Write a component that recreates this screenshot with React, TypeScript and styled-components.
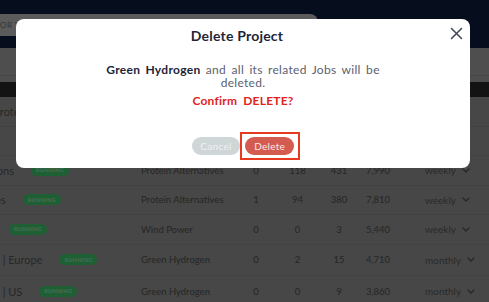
import styled, {createGlobalStyle} from 'styled-components'

const GlobalStyle = createGlobalStyle`
  html, body {
    margin: 0;
    padding: 0;
    width: 489px;
    height: 302px;
    overflow: hidden;
    font-family: 'Lato', 'Open Sans', sans-serif;
  }
`

const Page = styled.div`
  position: relative;
  width: 489px;
  height: 302px;
  overflow: hidden;
  background: #8e8e8e;
`

const TopBar = styled.header`
  height: 48px;
  background: #0c1a3a;
  padding-top: 14px;
  box-sizing: border-box;
`

const SearchBox = styled.div`
  width: 318px;
  height: 22px;
  background: #b6b6b6;
  border-top-right-radius: 8px;
  display: flex;
  align-items: center;
  font-size: 8px;
  letter-spacing: 0.6px;
  color: #6a6a6a;
  white-space: nowrap;
  overflow: hidden;
`

const Toolbar = styled.div`
  height: 34px;
  background: #9c9c9c;
  padding-top: 27px;
  box-sizing: border-box;

  &::after {
    content: '';
    display: block;
    border-top: 1px solid #8a8a8a;
  }
`

const TableWrap = styled.div`
  overflow: hidden;
`

const Table = styled.div`
  margin-left: -80px;
  width: 600px;
`

const HeaderRow = styled.div`
  height: 15px;
  background: #262626;
`

const Row = styled.div<{ $tall?: boolean }>`
  display: grid;
  grid-template-columns: 221px 94px 42px 41px 42px 36px 1fr;
  align-items: center;
  height: ${p => (p.$tall ? 30.5 : 28.5)}px;
  border-bottom: 1px solid #878787;
  font-size: 9.5px;
  color: #4c4c4c;
  white-space: nowrap;
`

const NameCell = styled.div`
  display: flex;
  align-items: center;
  gap: 17px;
  font-size: 11px;
  color: #505050;
`

const Badge = styled.span`
  background: #3fbf68;
  color: #92d9a8;
  font-size: 5.5px;
  font-weight: 700;
  letter-spacing: 0.3px;
  padding: 2.5px 5px;
  border-radius: 8px;
`

const NumCell = styled.div`
  text-align: center;
`

const FreqCell = styled.div`
  display: flex;
  align-items: center;
  gap: 6px;
  padding-left: 29px;
  color: #555;
  font-size: 10px;
`

const Overlay = styled.div`
  position: absolute;
  inset: 0;
  background: rgba(0, 0, 0, 0.5);
`

const Modal = styled.div`
  position: absolute;
  left: 16px;
  top: 19px;
  width: 454px;
  height: 149px;
  background: #fff;
  border-radius: 8px;
  display: flex;
  flex-direction: column;
  align-items: center;
  box-sizing: border-box;
  padding-top: 8px;
`

const Title = styled.h2`
  margin: 0 12px 0 0;
  font-size: 14px;
  font-weight: 700;
  color: #1e2538;
  line-height: 18px;
  letter-spacing: 0.2px;
`

const CloseButton = styled.button`
  position: absolute;
  right: 3px;
  top: 3px;
  width: 22px;
  height: 22px;
  border: none;
  background: none;
  padding: 0;
  display: grid;
  place-items: center;
  cursor: pointer;
`

const Message = styled.p`
  margin: 18px 0 0;
  width: 282px;
  text-align: center;
  font-size: 12px;
  line-height: 13px;
  letter-spacing: 0.3px;
  word-spacing: 2px;
  color: #5b6170;

  strong {
    color: #1e2538;
    font-weight: 700;
  }
`

const Confirm = styled.p`
  margin: 4px 0 0;
  font-size: 12px;
  line-height: 15px;
  font-weight: 700;
  letter-spacing: 0.2px;
  word-spacing: 3px;
  color: #e0241c;
`

const Actions = styled.div`
  margin-top: 24px;
  margin-left: 6px;
  display: flex;
  align-items: center;
`

const PillButton = styled.button<{ $variant: 'cancel' | 'delete' }>`
  height: 18px;
  border: none;
  border-radius: 9px;
  padding: 0 ${p => (p.$variant === 'cancel' ? 8 : 9)}px;
  font-family: inherit;
  font-size: 10px;
  letter-spacing: 0.3px;
  color: ${p => (p.$variant === 'cancel' ? '#eef1f2' : '#fbe9e7')};
  background: ${p => (p.$variant === 'cancel' ? '#cfd6d8' : '#d35b50')};
  cursor: pointer;
`

const FocusRing = styled.span`
  border: 2.5px solid #e83a1e;
  padding: 3px 3.5px;
  display: flex;
`

const rows = [
  {name: 'Fermentation | Protein'},
  {name: 'Electric Vehicles'},
  {name: 'Protein Innovations', sector: 'Protein Alternatives', v: ['0', '118', '431', '7,990'], freq: 'weekly'},
  {name: 'Meat Alternatives', sector: 'Protein Alternatives', v: ['1', '94', '380', '7,810'], freq: 'weekly'},
  {name: 'Offshore Wind', sector: 'Wind Power', v: ['0', '0', '3', '5,440'], freq: 'weekly'},
  {name: 'Green Hydrogen | Europe', sector: 'Green Hydrogen', v: ['0', '2', '15', '4,710'], freq: 'monthly', tall: true},
  {name: 'Green Hydrogen | US', sector: 'Green Hydrogen', v: ['0', '0', '9', '3,860'], freq: 'monthly', tall: true},
]

const Chevron = () => (
  <svg width='8' height='5' viewBox='0 0 8 5' fill='none'>
    <path d='M1 1l3 3 3-3' stroke='#4a4a4a' strokeWidth='1.2' strokeLinecap='round' strokeLinejoin='round'/>
  </svg>
)

export default function App() {
  return (
    <>
      <GlobalStyle/>
      <Page>
        <TopBar>
          <SearchBox>OR VIEW PROJECTS</SearchBox>
        </TopBar>
        <Toolbar/>
        <TableWrap>
          <Table>
            <HeaderRow/>
            {rows.map(r => (
              <Row key={r.name} $tall={r.tall}>
                <NameCell>
                  {r.name}
                  {r.sector && <Badge>RUNNING</Badge>}
                </NameCell>
                <div>{r.sector}</div>
                {(r.v ?? ['', '', '', '']).map((n, i) => <NumCell key={i}>{n}</NumCell>)}
                <FreqCell>
                  {r.freq && <>{r.freq}<Chevron/></>}
                </FreqCell>
              </Row>
            ))}
          </Table>
        </TableWrap>
        <Overlay/>
        <Modal>
          <CloseButton aria-label='close'>
            <svg width='13' height='13' viewBox='0 0 13 13'>
              <path d='M1.5 1.5l10 10M11.5 1.5l-10 10' stroke='#434a58' strokeWidth='1.6' strokeLinecap='round'/>
            </svg>
          </CloseButton>
          <Title>Delete Project</Title>
          <Message>
            <strong>Green Hydrogen</strong> and all its related Jobs will be deleted.
          </Message>
          <Confirm>Confirm DELETE?</Confirm>
          <Actions>
            <PillButton $variant='cancel'>Cancel</PillButton>
            <FocusRing>
              <PillButton $variant='delete'>Delete</PillButton>
            </FocusRing>
          </Actions>
        </Modal>
      </Page>
    </>
  )
}
